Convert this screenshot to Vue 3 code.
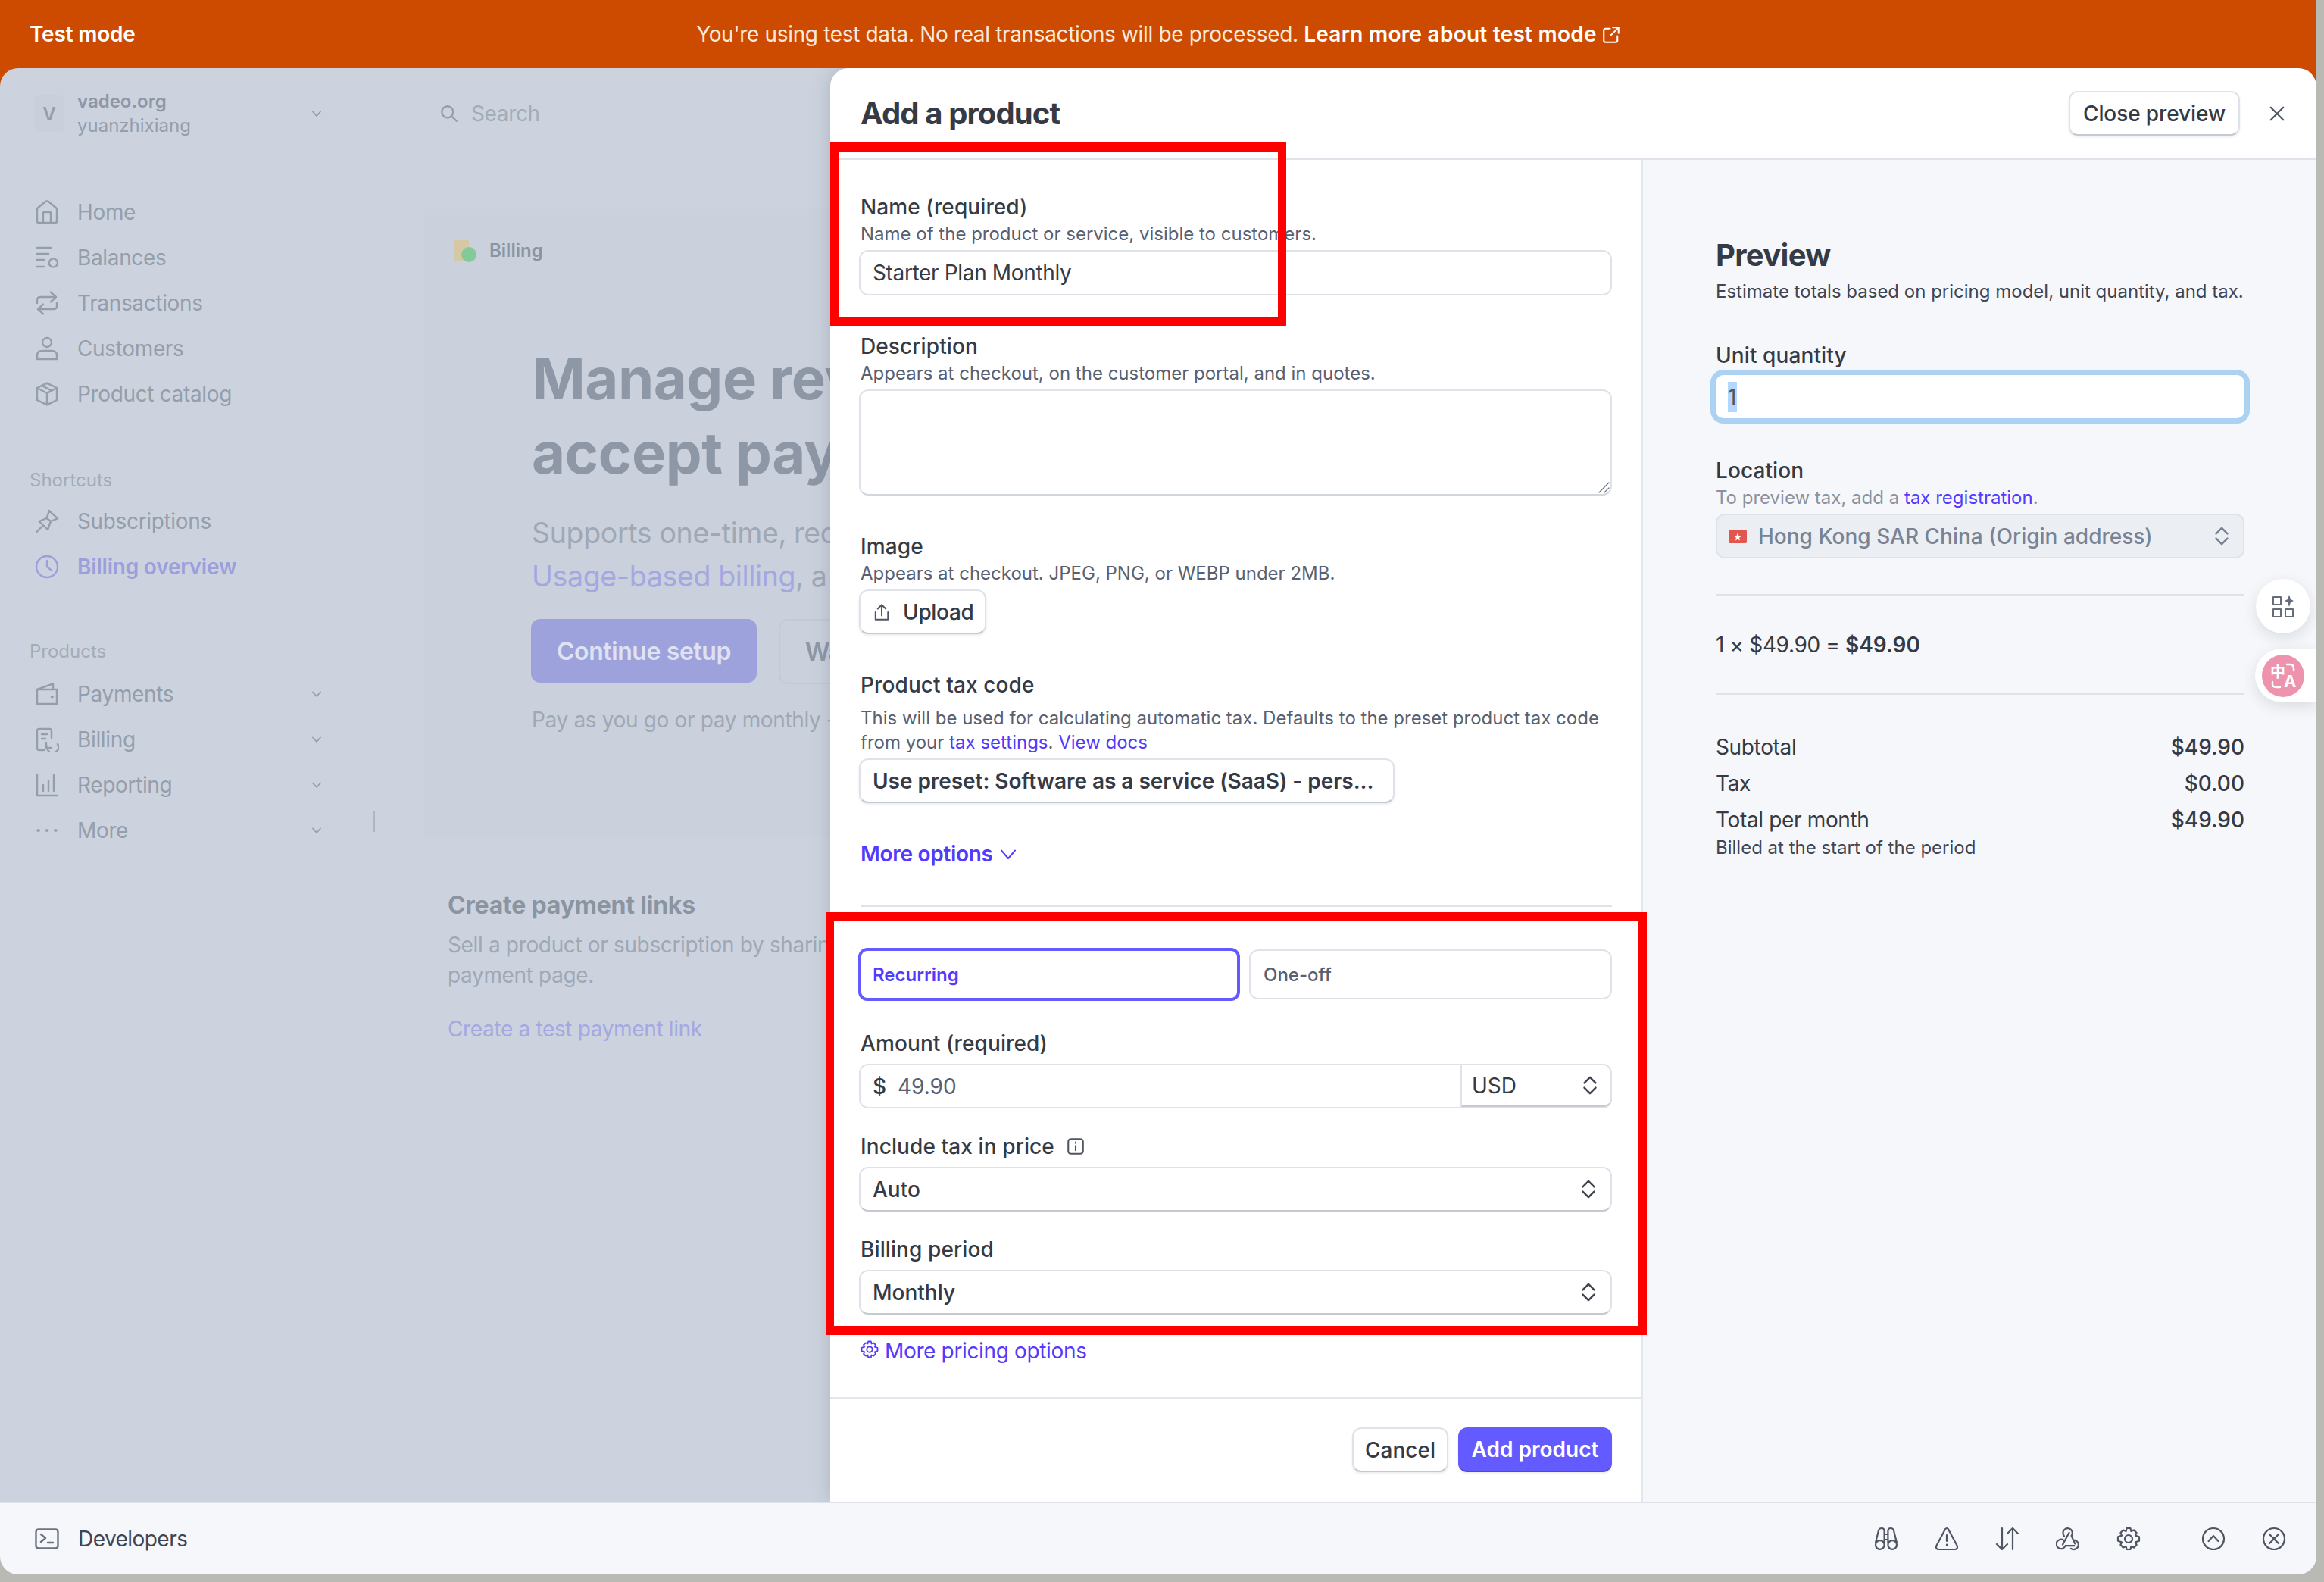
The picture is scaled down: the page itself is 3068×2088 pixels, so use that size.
<script setup>
const topNav = [
  { label: 'Home', icon: 'M1.5 6.2Q1.5 5.5 2 5.1L7 1Q8 .4 9 1L14 5.1Q14.5 5.5 14.5 6.2V14Q14.5 15 13.5 15H2.5Q1.5 15 1.5 14ZM5.5 15V8.5Q5.5 8 6 8H10Q10.5 8 10.5 8.5V15' },
  { label: 'Balances', icon: 'M1.5 1.5H10.5M1.5 5.5H9M1.5 9.5H6M1.5 14H6M15 11.5a2.8 2.8 0 1 1-5.6 0a2.8 2.8 0 1 1 5.6 0' },
  { label: 'Transactions', icon: 'M1.5 8V6Q1.5 4 3.5 4H14M10.5 .8L14 4L10.5 7.2M14.5 8V10Q14.5 12 12.5 12H2M5.5 8.8L2 12L5.5 15.2' },
  { label: 'Customers', icon: 'M11 4a3 3 0 1 1-6 0a3 3 0 1 1 6 0M1.5 15V12.5Q1.5 9.5 5 9.5H11Q14.5 9.5 14.5 12.5V15Z' },
  { label: 'Product catalog', icon: 'M8 .8L14.5 4V12L8 15.2L1.5 12V4ZM1.5 4L8 7.5L14.5 4M8 7.5V15M4.5 2.4L11 5.8' }
]
const productNav = [
  { label: 'Payments', icon: 'M1.5 5L12 1.2V5M1.5 5V14.5H14.5V5ZM11 10H11.8' },
  { label: 'Billing', icon: 'M6 15H3Q1.5 15 1.5 13.5V2.5Q1.5 1 3 1H9.5Q11 1 11 2.5V7M4.5 4.5H8M4.5 7.5H7M15 11a3.8 3.8 0 1 1-7 2M7.5 10V13.5H11' },
  { label: 'Reporting', icon: 'M1.5 1V15H15M5.5 8V12M9 5V12M12.5 1.5V12' },
  { label: 'More', icon: 'M2 8H2.6M7.7 8H8.3M13.4 8H14', dots: true }
]
const gear = 'M10.5 8a2.5 2.5 0 1 1-5 0a2.5 2.5 0 1 1 5 0M6.8 1H9.2L9.7 3L11.5 2.2L13.3 4L12.5 5.8L15 6.6V9.4L12.5 10.2L13.3 12L11.5 13.8L9.7 13L9.2 15H6.8L6.3 13L4.5 13.8L2.7 12L3.5 10.2L1 9.4V6.6L3.5 5.8L2.7 4L4.5 2.2L6.3 3Z'
const devIcons = [
  'M3 2.5Q3.4 1 5 1Q6.8 1 6.8 3V11M9.2 11V3Q9.2 1 11 1Q12.6 1 13 2.5L15 10.5M3 2.5L1 10.5M6.8 5H9.2M6.8 8.5H9.2M6.8 12a2.9 2.9 0 1 1-5.8 0a2.9 2.9 0 1 1 5.8 0M15 12a2.9 2.9 0 1 1-5.8 0a2.9 2.9 0 1 1 5.8 0',
  'M7 1.6Q8 .4 9 1.6L14.8 12.5Q15.5 14.8 13.5 15H2.5Q.5 14.8 1.2 12.5ZM8 5.5V9.5M8 11.8V12.4',
  'M4.5 1V15M1 11.5L4.5 15L8 11.5M11.5 15V1M8 4.5L11.5 1L15 4.5',
  'M5 8.8A3.1 3.1 0 1 0 6.3 12.6H12.2M8.8 3.9L4.5 11.8M5.5 6.2A3.1 3.1 0 1 1 10.3 6L12.6 11.2M11.6 8.8A3.1 3.1 0 1 1 10 14.4',
  gear
]
const updown = 'M2 7.5L8 1.5L14 7.5M2 12.5L8 18.5L14 12.5'
</script>

<template>
  <div class="screen">
    <div class="banner">
      <span class="banner-name">Test mode</span>
      <span class="banner-msg">You're using test data. No real transactions will be processed. <b>Learn more about test mode</b>
        <svg class="ext" viewBox="0 0 16 16"><path d="M7 2.5H3Q1.5 2.5 1.5 4V13Q1.5 14.5 3 14.5H12Q13.5 14.5 13.5 13V9M9.5 1.5H14.5V6.5M14.5 1.5L7.5 8.5" /></svg>
      </span>
    </div>

    <div class="stage">
      <aside class="sidebar">
        <div class="account">
          <div class="avatar">V</div>
          <div class="account-text">
            <div class="account-name">vadeo.org</div>
            <div class="account-user">yuanzhixiang</div>
          </div>
          <svg class="chev" viewBox="0 0 16 16"><path d="M3 5.5L8 11L13 5.5" /></svg>
        </div>

        <nav class="nav nav-top">
          <div v-for="item in topNav" :key="item.label" class="nav-item">
            <svg class="nav-icon" viewBox="0 0 16 16"><path :d="item.icon" /></svg>
            <span>{{ item.label }}</span>
          </div>
        </nav>

        <div class="nav-head head-short">Shortcuts</div>
        <div class="nav-item">
          <svg class="nav-icon" viewBox="0 0 16 16"><path d="M9.5 1L15 6.2L10.5 8L8.5 13.5L2.8 8L7.8 6ZM5.2 11L1.2 15M9.5 1L7.8 6L10.5 8" /></svg>
          <span>Subscriptions</span>
        </div>
        <div class="nav-item active">
          <svg class="nav-icon" viewBox="0 0 16 16"><path d="M15 8a7 7 0 1 1-14 0a7 7 0 1 1 14 0M8 4V8L10.5 10" /></svg>
          <span>Billing overview</span>
        </div>

        <div class="nav-head head-products">Products</div>
        <div v-for="item in productNav" :key="item.label" class="nav-item">
          <svg class="nav-icon" :class="{ dots: item.dots }" viewBox="0 0 16 16"><path :d="item.icon" /></svg>
          <span>{{ item.label }}</span>
          <svg class="chev" viewBox="0 0 16 16"><path d="M3 5.5L8 11L13 5.5" /></svg>
        </div>
        <div class="handle"></div>
      </aside>

      <main class="content">
        <div class="search">
          <svg class="search-icon" viewBox="0 0 16 16"><path d="M11.5 6.5a5 5 0 1 1-10 0a5 5 0 1 1 10 0M10.2 10.2L14.5 14.5" /></svg>
          <span>Search</span>
        </div>

        <section class="hero">
          <div class="pill">
            <svg class="pill-icon" viewBox="0 0 32 32">
              <rect x="1" y="2" width="20" height="28" fill="#d4c9a4" />
              <circle cx="21" cy="21" r="10" fill="#84c99a" />
            </svg>
            <span>Billing</span>
          </div>
          <div class="hero-body">
            <h1>Manage rev<br>accept pay</h1>
            <p class="hero-sub">Supports one-time, rec<br><span class="faint-link">Usage-based billing</span>, a</p>
            <div class="hero-actions">
              <div class="hero-primary">Continue setup</div>
              <div class="hero-secondary">Wa</div>
            </div>
            <p class="hero-note">Pay as you go or pay monthly -</p>
          </div>
        </section>

        <section class="links">
          <h2>Create payment links</h2>
          <p>Sell a product or subscription by sharin<br>payment page.</p>
          <div class="faint-link link-test">Create a test payment link</div>
        </section>
      </main>

      <div class="panel">
        <header class="panel-head">
          <h2>Add a product</h2>
          <div class="btn close-preview">Close preview</div>
          <svg class="close-x" viewBox="0 0 16 16"><path d="M2 2L14 14M14 2L2 14" /></svg>
        </header>

        <div class="panel-body">
          <div class="form-col">
            <div class="form">
              <div class="field">
                <div class="label">Name (required)</div>
                <div class="help">Name of the product or service, visible to customers.</div>
                <div class="input">Starter Plan Monthly</div>
              </div>
              <div class="field">
                <div class="label">Description</div>
                <div class="help">Appears at checkout, on the customer portal, and in quotes.</div>
                <div class="textarea">
                  <svg class="grip" viewBox="0 0 16 16"><path d="M15 2L2 15M15 9L9 15" /></svg>
                </div>
              </div>
              <div class="field">
                <div class="label">Image</div>
                <div class="help">Appears at checkout. JPEG, PNG, or WEBP under 2MB.</div>
                <div class="btn upload">
                  <svg class="upload-icon" viewBox="0 0 16 16"><path d="M8 11V1.5M4.5 5L8 1.5L11.5 5M2.5 8V14.5H13.5V8" /></svg>
                  <span>Upload</span>
                </div>
              </div>
              <div class="field tax-field">
                <div class="label">Product tax code</div>
                <div class="help help-tax">This will be used for calculating automatic tax. Defaults to the preset product tax code from your <a>tax settings</a>. <a>View docs</a></div>
                <div class="btn preset">Use preset: Software as a service (SaaS) - pers...</div>
              </div>
              <div class="more-options">More options
                <svg viewBox="0 0 16 16"><path d="M2 5L8 12L14 5" /></svg>
              </div>
              <div class="form-rule"></div>

              <div class="segments">
                <div class="segment on">Recurring</div>
                <div class="segment">One-off</div>
              </div>
              <div class="field amount-field">
                <div class="label">Amount (required)</div>
                <div class="input amount">
                  <span class="currency">$</span>
                  <span class="amount-value">49.90</span>
                  <div class="amount-unit">
                    USD
                    <svg class="updown" viewBox="0 0 16 20"><path :d="updown" /></svg>
                  </div>
                </div>
              </div>
              <div class="field select-field">
                <div class="label">Include tax in price
                  <svg class="info" viewBox="0 0 16 16"><path d="M4 1.5H12Q14.5 1.5 14.5 4V12Q14.5 14.5 12 14.5H4Q1.5 14.5 1.5 12V4Q1.5 1.5 4 1.5ZM8 7.5V11.5M8 4.4V5.2" /></svg>
                </div>
                <div class="select">Auto
                  <svg class="updown" viewBox="0 0 16 20"><path :d="updown" /></svg>
                </div>
              </div>
              <div class="field select-field">
                <div class="label">Billing period</div>
                <div class="select">Monthly
                  <svg class="updown" viewBox="0 0 16 20"><path :d="updown" /></svg>
                </div>
              </div>
              <div class="more-pricing">
                <svg viewBox="0 0 16 16"><path :d="gear" /></svg>
                More pricing options
              </div>
            </div>
            <footer class="form-foot">
              <div class="btn cancel">Cancel</div>
              <div class="btn add">Add product</div>
            </footer>
          </div>

          <div class="preview">
            <h2>Preview</h2>
            <div class="preview-sub">Estimate totals based on pricing model, unit quantity, and tax.</div>
            <div class="label unit-label">Unit quantity</div>
            <div class="qty"><span class="qty-sel">1</span></div>
            <div class="label loc-label">Location</div>
            <div class="help loc-help">To preview tax, add a <a>tax registration</a>.</div>
            <div class="loc-select">
              <svg class="flag" viewBox="0 0 24 18">
                <rect width="24" height="18" rx="2" fill="#e2564d" />
                <path d="M12 4L13.4 8L17 8.4L14 10.8L15 14.5L12 12.4L9 14.5L10 10.8L7 8.4L10.6 8Z" fill="#fff" />
              </svg>
              <span>Hong Kong SAR China (Origin address)</span>
              <svg class="updown" viewBox="0 0 16 20"><path :d="updown" /></svg>
            </div>
            <div class="rule rule-a"></div>
            <div class="equation">1 × $49.90 = <b>$49.90</b></div>
            <div class="rule"></div>
            <div class="total-row first"><span>Subtotal</span><b>$49.90</b></div>
            <div class="total-row"><span>Tax</span><b>$0.00</b></div>
            <div class="total-row"><span>Total per month</span><b>$49.90</b></div>
            <div class="billed">Billed at the start of the period</div>
          </div>
        </div>

        <div class="float-apps">
          <svg viewBox="0 0 32 32">
            <path d="M3 4H13V14H3ZM3 20H13V30H3ZM19 20H29V30H19Z" />
            <path class="spark" d="M24 1L26 7L30 9L26 11L24 17L22 11L18 9L22 7Z" />
          </svg>
        </div>
        <div class="float-translate">
          <div class="translate-dot">
            <span class="t-zh">中</span><span class="t-a">A</span>
            <svg class="t-arcs" viewBox="0 0 56 56"><path d="M33 13H37Q42 13 42 18V21M14 36V39Q14 43 19 43H24" /></svg>
          </div>
        </div>
      </div>
    </div>

    <div class="devbar">
      <svg class="dev-term" viewBox="0 0 32 28"><path d="M5 1.5H27Q30.5 1.5 30.5 5V23Q30.5 26.5 27 26.5H5Q1.5 26.5 1.5 23V5Q1.5 1.5 5 1.5ZM8 8L14 13L8 18M17 19H24" /></svg>
      <span class="dev-name">Developers</span>
      <div class="dev-tools">
        <svg v-for="(d, i) in devIcons" :key="i" viewBox="0 0 16 16"><path :d="d" /></svg>
        <svg class="dev-sep" viewBox="0 0 16 16"><path d="M15 8a7 7 0 1 1-14 0a7 7 0 1 1 14 0M4.8 9.5L8 6L11.2 9.5" /></svg>
        <svg viewBox="0 0 16 16"><path d="M15 8a7 7 0 1 1-14 0a7 7 0 1 1 14 0M5 5L11 11M11 5L5 11" /></svg>
      </div>
    </div>

    <div class="mark mark-name"></div>
    <div class="mark mark-price"></div>
  </div>
</template>

<style scoped>
.screen {
  position: relative;
  width: 3058px;
  height: 2078px;
  display: flex;
  flex-direction: column;
  overflow: hidden;
  background: linear-gradient(#cc4b00 200px, transparent 200px);
  font-family: Inter, "Noto Sans", sans-serif;
  font-size: 28px;
  letter-spacing: -0.35px;
  color: #353a44;
}
svg {
  fill: none;
  stroke: currentColor;
  stroke-width: 1.2;
  stroke-linecap: round;
  stroke-linejoin: round;
  flex: none;
}
h1, h2, p { margin: 0; }

.banner {
  height: 90px;
  flex: none;
  position: relative;
  display: flex;
  align-items: center;
  justify-content: center;
  color: #fff;
}
.banner-name {
  position: absolute;
  left: 39px;
  font-weight: 600;
  letter-spacing: -0.2px;
}
.banner-msg { color: #fbe9dd; }
.banner-msg b { font-weight: 600; color: #fff; letter-spacing: 0.25px; }
.ext { width: 24px; height: 24px; margin-left: 7px; vertical-align: -3px; color: #fff; stroke-width: 1.4; }

.stage {
  position: relative;
  flex: 1;
  min-height: 0;
  display: flex;
  background: #ccd3de;
  border-radius: 24px 24px 0 0;
  overflow: hidden;
}

.sidebar {
  position: relative;
  width: 484px;
  flex: none;
  padding: 30px 59px 0 39px;
  box-sizing: border-box;
  color: #959eab;
}
.account { display: flex; align-items: center; height: 60px; }
.avatar {
  width: 40px;
  height: 48px;
  margin: 0 17px 0 6px;
  display: flex;
  align-items: center;
  justify-content: center;
  background: #c9d0dc;
  border-radius: 6px;
  font-size: 24px;
  font-weight: 600;
  letter-spacing: 0;
}
.account-text { flex: 1; font-size: 24px; line-height: 32px; letter-spacing: 0; }
.account-name { font-weight: 600; color: #8e97a5; }
.chev { width: 16px; height: 16px; color: #959eab; stroke-width: 1.8; margin-left: auto; margin-right: -1px; }
.nav-top { margin-top: 70px; }
.nav-item { display: flex; align-items: center; height: 60px; }
.nav-icon { width: 32px; height: 32px; margin: 0 24px 0 7px; }
.nav-icon.dots { stroke-width: 1.8; }
.nav-head { font-size: 24px; line-height: 32px; color: #a3acb9; letter-spacing: 0; }
.head-short { margin: 68px 0 8px; }
.head-products { margin: 66px 0 10px; }
.active { color: #9c9fdb; font-weight: 600; letter-spacing: -0.2px; }
.handle {
  position: absolute;
  left: 493px;
  top: 980px;
  width: 2px;
  height: 28px;
  background: #aeb6c2;
}

.content {
  flex: 1;
  min-width: 0;
  padding-left: 76px;
  overflow: hidden;
}
.search {
  display: flex;
  align-items: center;
  height: 72px;
  margin: 24px 0 0 15px;
  padding-left: 6px;
  color: #a3acb9;
}
.search-icon { width: 24px; height: 24px; margin: 0 17px 0 0; stroke-width: 1.6; color: #959eab; }
.hero {
  margin-top: 90px;
  height: 829px;
  background: #cad1dc;
  padding: 23px 0 0 23px;
  box-sizing: border-box;
  white-space: nowrap;
}
.pill {
  display: inline-flex;
  align-items: center;
  height: 63px;
  padding: 0 18px 0 15px;
  font-size: 24px;
  font-weight: 600;
  letter-spacing: 0;
  color: #8b94a2;
  border-radius: 8px;
}
.pill-icon { width: 32px; height: 32px; margin-right: 16px; stroke: none; }
.hero-body { margin: 88px 0 0 119px; }
.hero-body h1 {
  font-size: 76px;
  line-height: 98px;
  font-weight: 700;
  letter-spacing: -0.5px;
  color: #8d97a5;
}
.hero-sub {
  margin-top: 29px;
  font-size: 37.5px;
  line-height: 57px;
  color: #a0a8b5;
}
.faint-link { color: #a4a8e2; }
.hero-actions { display: flex; gap: 29px; margin-top: 28px; }
.hero-primary {
  width: 298px;
  height: 84px;
  margin-left: -1px;
  display: flex;
  align-items: center;
  justify-content: center;
  background: #9da2dc;
  border-radius: 12px;
  font-size: 32px;
  font-weight: 600;
  letter-spacing: -0.4px;
  color: #dfe2f0;
}
.hero-secondary {
  height: 82px;
  padding: 0 33px;
  display: flex;
  align-items: center;
  border: 2px solid #c2cad6;
  border-radius: 12px;
  font-size: 32px;
  font-weight: 600;
  color: #8d97a5;
}
.hero-note { margin-top: 27px; line-height: 40px; color: #a0a8b5; }
.links {
  margin-top: 40px;
  padding: 30px 0 0 31px;
  white-space: nowrap;
  color: #a0a8b5;
}
.links h2 { font-size: 32px; line-height: 40px; font-weight: 700; letter-spacing: -0.2px; color: #8b94a1; }
.links p { margin-top: 12px; line-height: 40px; }
.link-test { margin-top: 31px; line-height: 40px; }

.panel {
  position: absolute;
  top: 0;
  right: 0;
  bottom: 0;
  width: 1962px;
  display: flex;
  flex-direction: column;
  background: #fff;
  border-radius: 24px 24px 0 0;
  box-shadow: 0 0 26px rgba(90, 100, 120, 0.28);
}
.panel-head {
  height: 121px;
  flex: none;
  box-sizing: border-box;
  display: flex;
  align-items: center;
  padding: 0 41px 0 40px;
  border-bottom: 2px solid #dfe3e9;
}
.panel-head h2 { flex: 1; font-size: 40px; font-weight: 700; letter-spacing: -0.9px; }
.btn {
  display: flex;
  align-items: center;
  box-sizing: border-box;
  background: #fff;
  border: 2px solid #dfe3e9;
  border-bottom-color: #c5cad2;
  border-radius: 12px;
  box-shadow: 0 2px 3px rgba(60, 66, 87, 0.1);
  font-weight: 500;
  letter-spacing: 0;
  white-space: nowrap;
}
.close-preview { width: 226px; height: 59px; justify-content: center; margin-right: 38px; letter-spacing: -0.1px; }
.close-x { width: 22px; height: 22px; color: #4f5563; stroke-width: 1.6; }

.panel-body { flex: 1; min-height: 0; display: flex; }
.form-col {
  width: 1073px;
  flex: none;
  box-sizing: border-box;
  display: flex;
  flex-direction: column;
  border-right: 2px solid #e3e6ec;
}
.form { flex: 1; padding: 42px 39px 0 38px; }
.field + .field { margin-top: 47px; }
.label { font-weight: 500; line-height: 40px; padding-left: 2px; display: flex; align-items: center; letter-spacing: 0.1px; }
.help { font-size: 24px; line-height: 32px; color: #596171; padding-left: 2px; letter-spacing: 0; }
.help a, .loc-help a { color: #533afd; }
.help-tax { margin-top: 8px; }
.input, .select {
  margin-top: 5px;
  height: 60px;
  box-sizing: border-box;
  display: flex;
  align-items: center;
  padding: 0 16px;
  border: 2px solid #dfe3e9;
  border-radius: 12px;
  background: #fff;
}
.textarea {
  position: relative;
  margin-top: 5px;
  height: 140px;
  box-sizing: border-box;
  border: 2px solid #dfe3e9;
  border-bottom-color: #d2d6dd;
  border-radius: 12px;
}
.grip { position: absolute; right: 1px; bottom: 1px; width: 16px; height: 16px; color: #6b7280; }
.upload { width: 168px; height: 59px; padding-left: 16px; margin-top: 5px; letter-spacing: -0.35px; }
.upload-icon { width: 24px; height: 24px; margin-right: 16px; stroke-width: 1.3; color: #4f5563; }
.preset { width: 707px; height: 59px; padding-left: 16px; margin-top: 5px; font-weight: 600; letter-spacing: -0.05px; }
.more-options {
  margin-top: 47px;
  padding-left: 2px;
  height: 40px;
  display: flex;
  align-items: center;
  color: #533afd;
  font-weight: 600;
  letter-spacing: -0.3px;
}
.more-options svg { width: 24px; height: 24px; margin-left: 8px; stroke-width: 1.3; }
.form-rule { margin: 48px 0 0 2px; height: 2px; background: #dfe3e9; }
.segments { display: flex; align-items: center; gap: 12px; margin-top: 54px; }
.segment {
  height: 66px;
  flex: 1;
  box-sizing: border-box;
  display: flex;
  align-items: center;
  padding-left: 17px;
  border: 2px solid #dfe3e9;
  border-radius: 12px;
  font-size: 24px;
  font-weight: 500;
  letter-spacing: 0;
  color: #596171;
}
.segment.on {
  flex: none;
  width: 504px;
  height: 70px;
  margin-left: -1px;
  padding-left: 15px;
  border: 4px solid #635bff;
  color: #533afd;
  font-weight: 600;
}
.amount-field { margin-top: 36px; }
.select-field { margin-top: 30px !important; }
.amount, .select { height: 59px; margin-top: 7px; }
.amount { padding: 0 0 0 16px; }
.currency { width: 33px; font-weight: 500; letter-spacing: 0; }
.amount-value { flex: 1; color: #596171; letter-spacing: 0; }
.amount-unit {
  width: 200px;
  height: 100%;
  box-sizing: border-box;
  margin-right: -2px;
  padding: 0 19px 0 13px;
  display: flex;
  align-items: center;
  justify-content: space-between;
  border-left: 2px solid #dfe3e9;
  border-bottom: 2px solid #c5cad2;
  border-radius: 0 12px 12px 0;
  letter-spacing: 0;
}
.select { justify-content: space-between; padding-right: 19px; border-bottom-color: #c5cad2; font-weight: 500; letter-spacing: 0; }
.updown { width: 20px; height: 25px; stroke-width: 2; color: #414552; }
.info { width: 24px; height: 24px; margin-left: 16px; stroke-width: 1.4; color: #4f5563; }
.more-pricing {
  margin-top: 28px;
  padding-left: 2px;
  height: 40px;
  display: flex;
  align-items: center;
  color: #533afd;
}
.more-pricing svg { width: 24px; height: 24px; margin: -4px 8px 0 0; stroke-width: 1.2; }
.form-foot {
  height: 138px;
  flex: none;
  box-sizing: border-box;
  display: flex;
  justify-content: flex-end;
  gap: 13px;
  padding: 38px 39px 0 0;
  border-top: 2px solid #e3e6ec;
}
.cancel { width: 127px; height: 59px; justify-content: center; }
.add {
  width: 203px;
  height: 59px;
  justify-content: center;
  background: #635bff;
  border: none;
  border-bottom: 2px solid #5149d6;
  color: #fff;
  font-weight: 600;
}

.preview {
  position: relative;
  flex: 1;
  box-sizing: border-box;
  padding: 98px 95px 0 96px;
  background: #f5f7fa;
}
.preview h2 { font-size: 40px; line-height: 56px; font-weight: 700; letter-spacing: -0.7px; }
.preview-sub { margin-top: 4px; font-size: 24px; line-height: 32px; color: #414552; letter-spacing: 0; }
.preview .label { padding-left: 0; }
.unit-label { margin-top: 48px; }
.qty {
  margin-top: 6px;
  height: 57px;
  box-sizing: border-box;
  display: flex;
  align-items: center;
  padding-left: 16px;
  background: #fff;
  border-radius: 10px;
  box-shadow: 0 0 0 7px #abd2f2;
}
.qty-sel { width: 12px; background: #b3d7ff; line-height: 40px; color: #4f5563; font-weight: 400; }
.loc-label { margin-top: 49px; }
.loc-help { padding-left: 0; color: #8a92a1; }
.loc-select {
  margin-top: 5px;
  height: 59px;
  box-sizing: border-box;
  display: flex;
  align-items: center;
  padding: 0 18px 0 15px;
  border: 2px solid #dfe3e9;
  border-radius: 12px;
  background: #ebeef2;
  color: #7a8394;
  font-weight: 500;
  letter-spacing: 0;
}
.loc-select span { flex: 1; }
.loc-select .updown { color: #7a8394; }
.flag { width: 24px; height: 18px; margin-right: 15px; stroke: none; }
.rule { height: 2px; background: #dfe3e9; }
.rule-a { margin-top: 47px; }
.equation { margin: 45px 0 44px; line-height: 40px; }
.equation b { font-weight: 600; letter-spacing: 0; }
.total-row { display: flex; justify-content: space-between; line-height: 40px; margin-top: 8px; }
.total-row.first { margin-top: 49px; }
.total-row b { font-weight: 500; letter-spacing: 0; }
.billed { margin-top: 1px; font-size: 24px; line-height: 32px; color: #414552; letter-spacing: 0; }

.float-apps {
  position: absolute;
  left: 1882px;
  top: 674px;
  width: 72px;
  height: 72px;
  display: flex;
  align-items: center;
  justify-content: center;
  background: #fff;
  border-radius: 50%;
  box-shadow: 0 6px 18px rgba(60, 66, 87, 0.14);
  color: #666c78;
}
.float-apps svg { width: 32px; height: 32px; stroke-width: 2; }
.float-apps .spark { fill: currentColor; stroke: none; }
.float-translate {
  position: absolute;
  right: 0;
  top: 766px;
  width: 81px;
  height: 71px;
  display: flex;
  align-items: center;
  padding-left: 9px;
  box-sizing: border-box;
  background: #fff;
  border-radius: 36px 0 0 36px;
  box-shadow: 0 6px 18px rgba(60, 66, 87, 0.14);
}
.translate-dot {
  position: relative;
  width: 56px;
  height: 56px;
  background: #ee93ad;
  border-radius: 50%;
  color: #fff;
  font-weight: 700;
  letter-spacing: 0;
}
.t-zh {
  position: absolute;
  left: 11px;
  top: 12px;
  font: 700 20px/20px "Noto Sans CJK SC", sans-serif;
}
.t-a { position: absolute; left: 29px; top: 23px; font-size: 22px; line-height: 24px; }
.t-arcs { position: absolute; inset: 0; width: 56px; height: 56px; stroke-width: 2.4; color: #fff; }

.devbar {
  height: 96px;
  flex: none;
  position: relative;
  box-sizing: border-box;
  display: flex;
  align-items: center;
  padding-left: 46px;
  background: #f5f7fa;
  border-top: 2px solid #dfe3e9;
  border-radius: 0 0 24px 24px;
  color: #414552;
}
.dev-term { width: 32px; height: 28px; margin-right: 25px; stroke-width: 2.4; color: #6b7280; }
.dev-name { letter-spacing: -0.55px; }
.dev-tools {
  margin-left: auto;
  display: flex;
  align-items: center;
  gap: 48px;
  padding-right: 40px;
  color: #4f5563;
}
.dev-tools svg { width: 32px; height: 32px; stroke-width: 1.1; }
.dev-sep { margin-left: 32px; }

.mark {
  position: absolute;
  box-sizing: border-box;
  border-style: solid;
  border-color: #f00;
  border-width: 12px 11px;
  pointer-events: none;
}
.mark-name { left: 1096px; top: 188px; width: 602px; height: 242px; }
.mark-price { left: 1090px; top: 1204px; width: 1084px; height: 558px; }
</style>

<style>
body {
  margin: 0;
  background: #b9bab4;
}
</style>
